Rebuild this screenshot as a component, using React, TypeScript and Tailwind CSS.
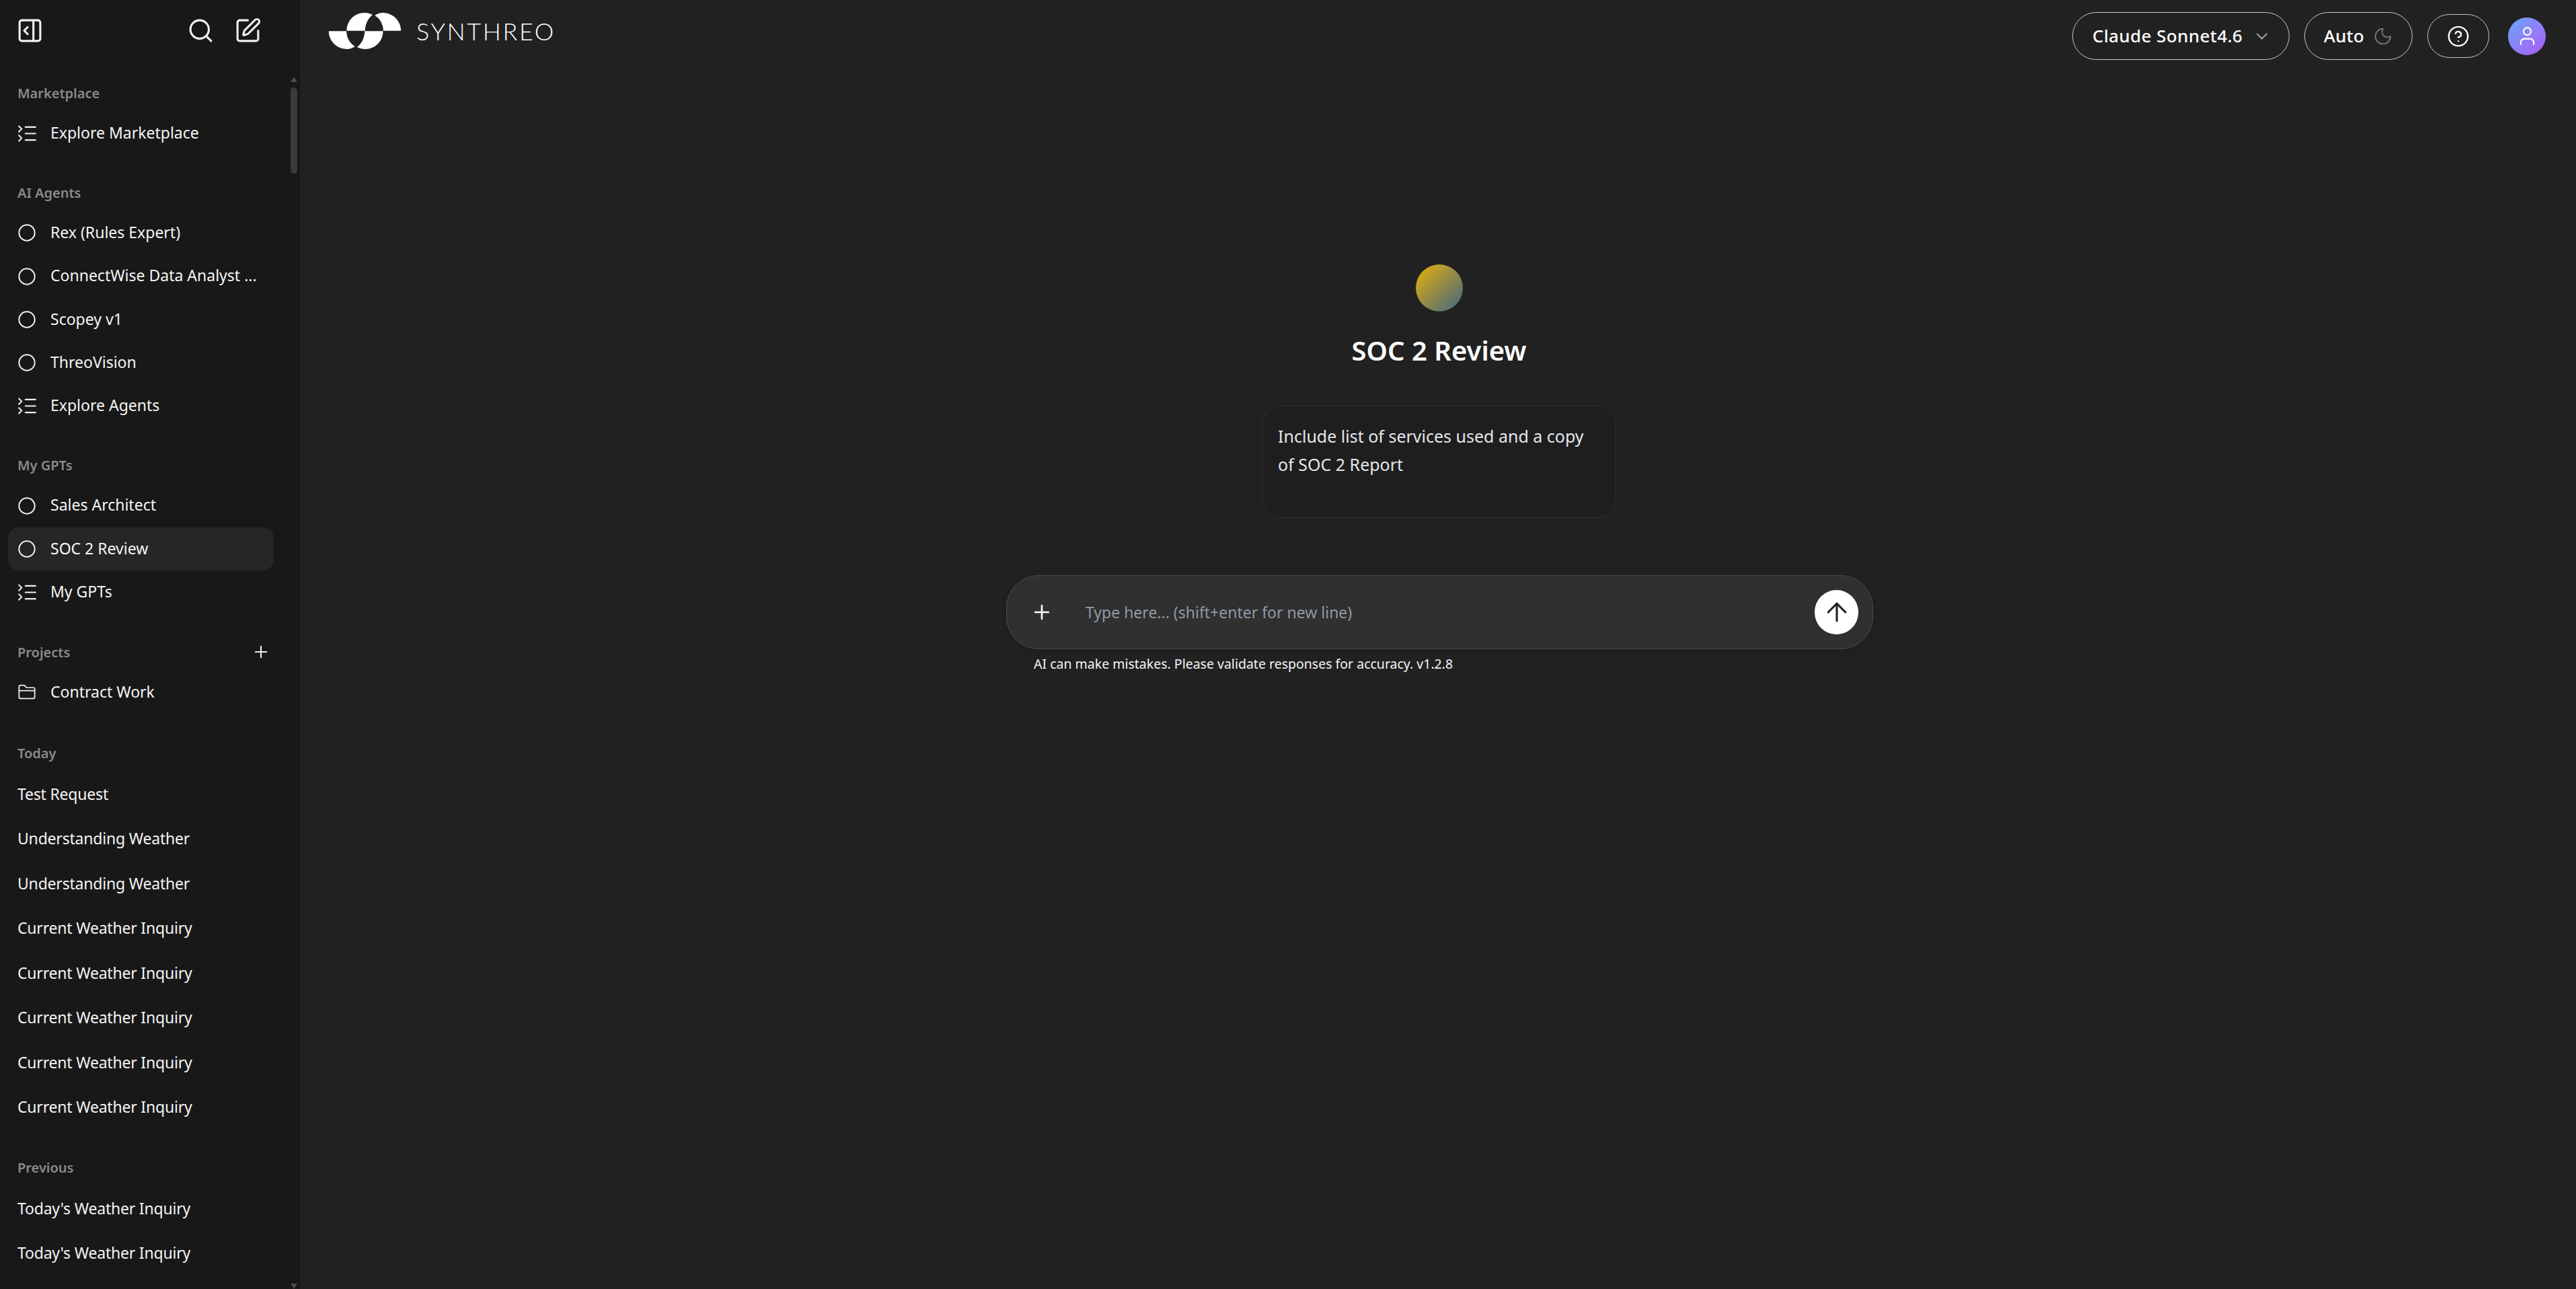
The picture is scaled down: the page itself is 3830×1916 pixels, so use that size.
import { ArrowUp, ChevronDown, Circle, CircleHelp, FolderClosed, ListCollapse, Moon, PanelRightOpen, Plus, Search, SquarePen, User } from 'lucide-react'
import type { ReactNode } from 'react'

const agents = ['Rex (Rules Expert)', 'ConnectWise Data Analyst ...', 'Scopey v1', 'ThreoVision']
const today = [
  'Test Request',
  'Understanding Weather',
  'Understanding Weather',
  'Current Weather Inquiry',
  'Current Weather Inquiry',
  'Current Weather Inquiry',
  'Current Weather Inquiry',
  'Current Weather Inquiry',
]
const previous = ["Today's Weather Inquiry", "Today's Weather Inquiry"]

function SectionLabel({ children }: { children: ReactNode }) {
  return <div className="flex h-[54px] items-center pb-[1px] pl-[14px] text-[20px] font-semibold text-[#8a8a8a]">{children}</div>
}

function NavRow({ icon, label, active }: { icon: ReactNode; label: string; active?: boolean }) {
  return (
    <div className={`flex h-[64.25px] items-center gap-[21px] rounded-[16px] pl-[14px] ${active ? 'bg-[#262626]' : ''}`}>
      <span className="flex w-7 justify-center">{icon}</span>
      <span className="pb-[2px] text-[23px] whitespace-nowrap text-[#f5f5f5]">{label}</span>
    </div>
  )
}

function ChatRow({ label }: { label: string }) {
  return <div className="flex h-[66.5px] items-center pb-[2px] pl-[14px] text-[23px] tracking-[-0.2px] whitespace-nowrap text-[#f5f5f5]">{label}</div>
}

const ringIcon = <Circle size={28} strokeWidth={1.7} className="shrink-0" />
const listIcon = <ListCollapse size={33} strokeWidth={1.5} className="shrink-0" />

function Sidebar() {
  return (
    <aside className="relative h-full w-[446px] shrink-0 overflow-hidden bg-[#181818] text-[#f0f0f0]">
      <div className="flex h-[112px] items-start justify-between pt-[25px] pr-[57px] pl-[24px]">
        <PanelRightOpen size={41} strokeWidth={1.8} />
        <div className="flex gap-[29px]">
          <Search size={41} strokeWidth={1.8} />
          <SquarePen size={41} strokeWidth={1.8} />
        </div>
      </div>

      <nav className="w-[407px] pl-3">
        <SectionLabel>Marketplace</SectionLabel>
        <NavRow icon={listIcon} label="Explore Marketplace" />

        <div className="mt-[30px]">
          <SectionLabel>AI Agents</SectionLabel>
          {agents.map((a) => (
            <NavRow key={a} icon={ringIcon} label={a} />
          ))}
          <NavRow icon={listIcon} label="Explore Agents" />
        </div>

        <div className="mt-[30px]">
          <SectionLabel>My GPTs</SectionLabel>
          <NavRow icon={ringIcon} label="Sales Architect" />
          <NavRow icon={ringIcon} label="SOC 2 Review" active />
          <NavRow icon={listIcon} label="My GPTs" />
        </div>

        <div className="mt-[31px]">
          <div className="flex items-center justify-between pr-[5px]">
            <SectionLabel>Projects</SectionLabel>
            <Plus size={28} strokeWidth={1.8} className="mb-[3px]" />
          </div>
          <NavRow icon={<FolderClosed size={28} strokeWidth={1.5} className="shrink-0" />} label="Contract Work" />
        </div>

        <div className="mt-[32px]">
          <SectionLabel>Today</SectionLabel>
          {today.map((c, i) => (
            <ChatRow key={i} label={c} />
          ))}
        </div>

        <div className="mt-[30px]">
          <SectionLabel>Previous</SectionLabel>
          {previous.map((c, i) => (
            <ChatRow key={i} label={c} />
          ))}
        </div>
      </nav>

      {/* scrollbar */}
      <div className="absolute top-[114px] left-[432px] h-0 w-0 border-x-[5px] border-b-[8px] border-x-transparent border-b-[#4a4a4a]" />
      <div className="absolute top-[130px] left-[432px] h-[128px] w-[10px] rounded-full bg-[#3a3a3a]" />
      <div className="absolute bottom-0 left-[432px] h-0 w-0 border-x-[5px] border-t-[8px] border-x-transparent border-t-[#4a4a4a]" />
    </aside>
  )
}

function Logo() {
  return (
    <svg width="109" height="56" viewBox="54 53 326 170" fill="#ffffff">
      <path d="M135 137C135 92 170 56 215 56C228 56 241 59 252 65C232 80 218 107 218 137Z" />
      <path d="M300 137C300 107 285 82 262 68C273 60 285 56 298 56C343 56 380 92 380 137Z" />
      <g transform="rotate(180 217 138)">
        <path d="M135 137C135 92 170 56 215 56C228 56 241 59 252 65C232 80 218 107 218 137Z" />
        <path d="M300 137C300 107 285 82 262 68C273 60 285 56 298 56C343 56 380 92 380 137Z" />
      </g>
    </svg>
  )
}

function Header() {
  return (
    <header className="flex items-start justify-between pt-[18px] pr-[45px] pl-[42px]">
      <div className="flex h-[56px] items-center gap-[22px]">
        <Logo />
        <span className="font-['Lato',sans-serif] text-[36px] font-light tracking-[2.6px] text-white">SYNTHREO</span>
      </div>
      <div className="flex h-[71px] items-center gap-[22px]">
        <button className="flex h-[71px] w-[323px] items-center gap-[15px] rounded-full border border-[#c9c9c9] pl-[29px] text-[26px] font-medium tracking-[0.4px] whitespace-nowrap text-white">
          Claude Sonnet4.6
          <ChevronDown size={28} strokeWidth={1.8} className="text-[#9ca3af]" />
        </button>
        <button className="flex h-[71px] w-[161px] items-center gap-[13px] rounded-full border border-[#c9c9c9] pl-[28px] text-[26px] font-medium tracking-[0.2px] text-white">
          Auto
          <Moon size={30} strokeWidth={1.6} className="text-[#6b7280]" />
        </button>
        <button className="flex h-[65px] w-[92px] items-center justify-center rounded-full border border-[#c9c9c9] text-white">
          <CircleHelp size={34} strokeWidth={1.7} />
        </button>
        <div className="ml-[6px] flex h-[56px] w-[56px] items-center justify-center rounded-full bg-gradient-to-br from-[#60a5fa] to-[#a855f7] text-white">
          <User size={33} strokeWidth={1.5} />
        </div>
      </div>
    </header>
  )
}

function Composer() {
  return (
    <div className="ml-[2px] w-[1289px]">
      <div className="flex h-[110px] items-center rounded-[48px] border border-[#4a4a4a] bg-[#303030] pr-[21px] pl-[35px] shadow-[0_2px_8px_rgba(0,0,0,0.15)]">
        <Plus size={34} strokeWidth={1.8} className="shrink-0 text-white" />
        <input
          placeholder="Type here... (shift+enter for new line)"
          className="ml-[48px] min-w-0 flex-1 bg-transparent text-[23px] outline-none placeholder:text-[#8f99a5]"
        />
        <button className="flex h-[66px] w-[65px] items-center justify-center rounded-full bg-white text-[#212121]">
          <ArrowUp size={44} strokeWidth={1.7} />
        </button>
      </div>
      <p className="mt-[8px] pl-[41px] text-[19.5px] leading-[28px] text-[#f5f5f5]">AI can make mistakes. Please validate responses for accuracy. v1.2.8</p>
    </div>
  )
}

export default function App() {
  return (
    <div className="flex h-screen w-full overflow-hidden bg-[#212121] font-['Noto_Sans',sans-serif]">
      <Sidebar />
      <main className="flex min-w-0 flex-1 flex-col">
        <Header />
        <div className="mt-[304px] flex flex-col items-center pl-[3px]">
          <div className="h-[70px] w-[70px] rounded-full bg-linear-to-br/srgb from-[#eab308] to-[#3f6485]" />
          <h1 className="mt-[28px] pb-[1px] text-[40px] leading-[60px] font-semibold text-white">SOC 2 Review</h1>
          <div className="mt-[51px] h-[167px] w-[525px] rounded-[28px] border border-[#2f2f2f] bg-[#1e1e1e] px-[22px] pt-[23px] text-[25px] leading-[42px] text-[#e5e7eb]">
            Include list of services used and a copy of SOC 2 Report
          </div>
          <div className="mt-[85px]">
            <Composer />
          </div>
        </div>
      </main>
    </div>
  )
}
